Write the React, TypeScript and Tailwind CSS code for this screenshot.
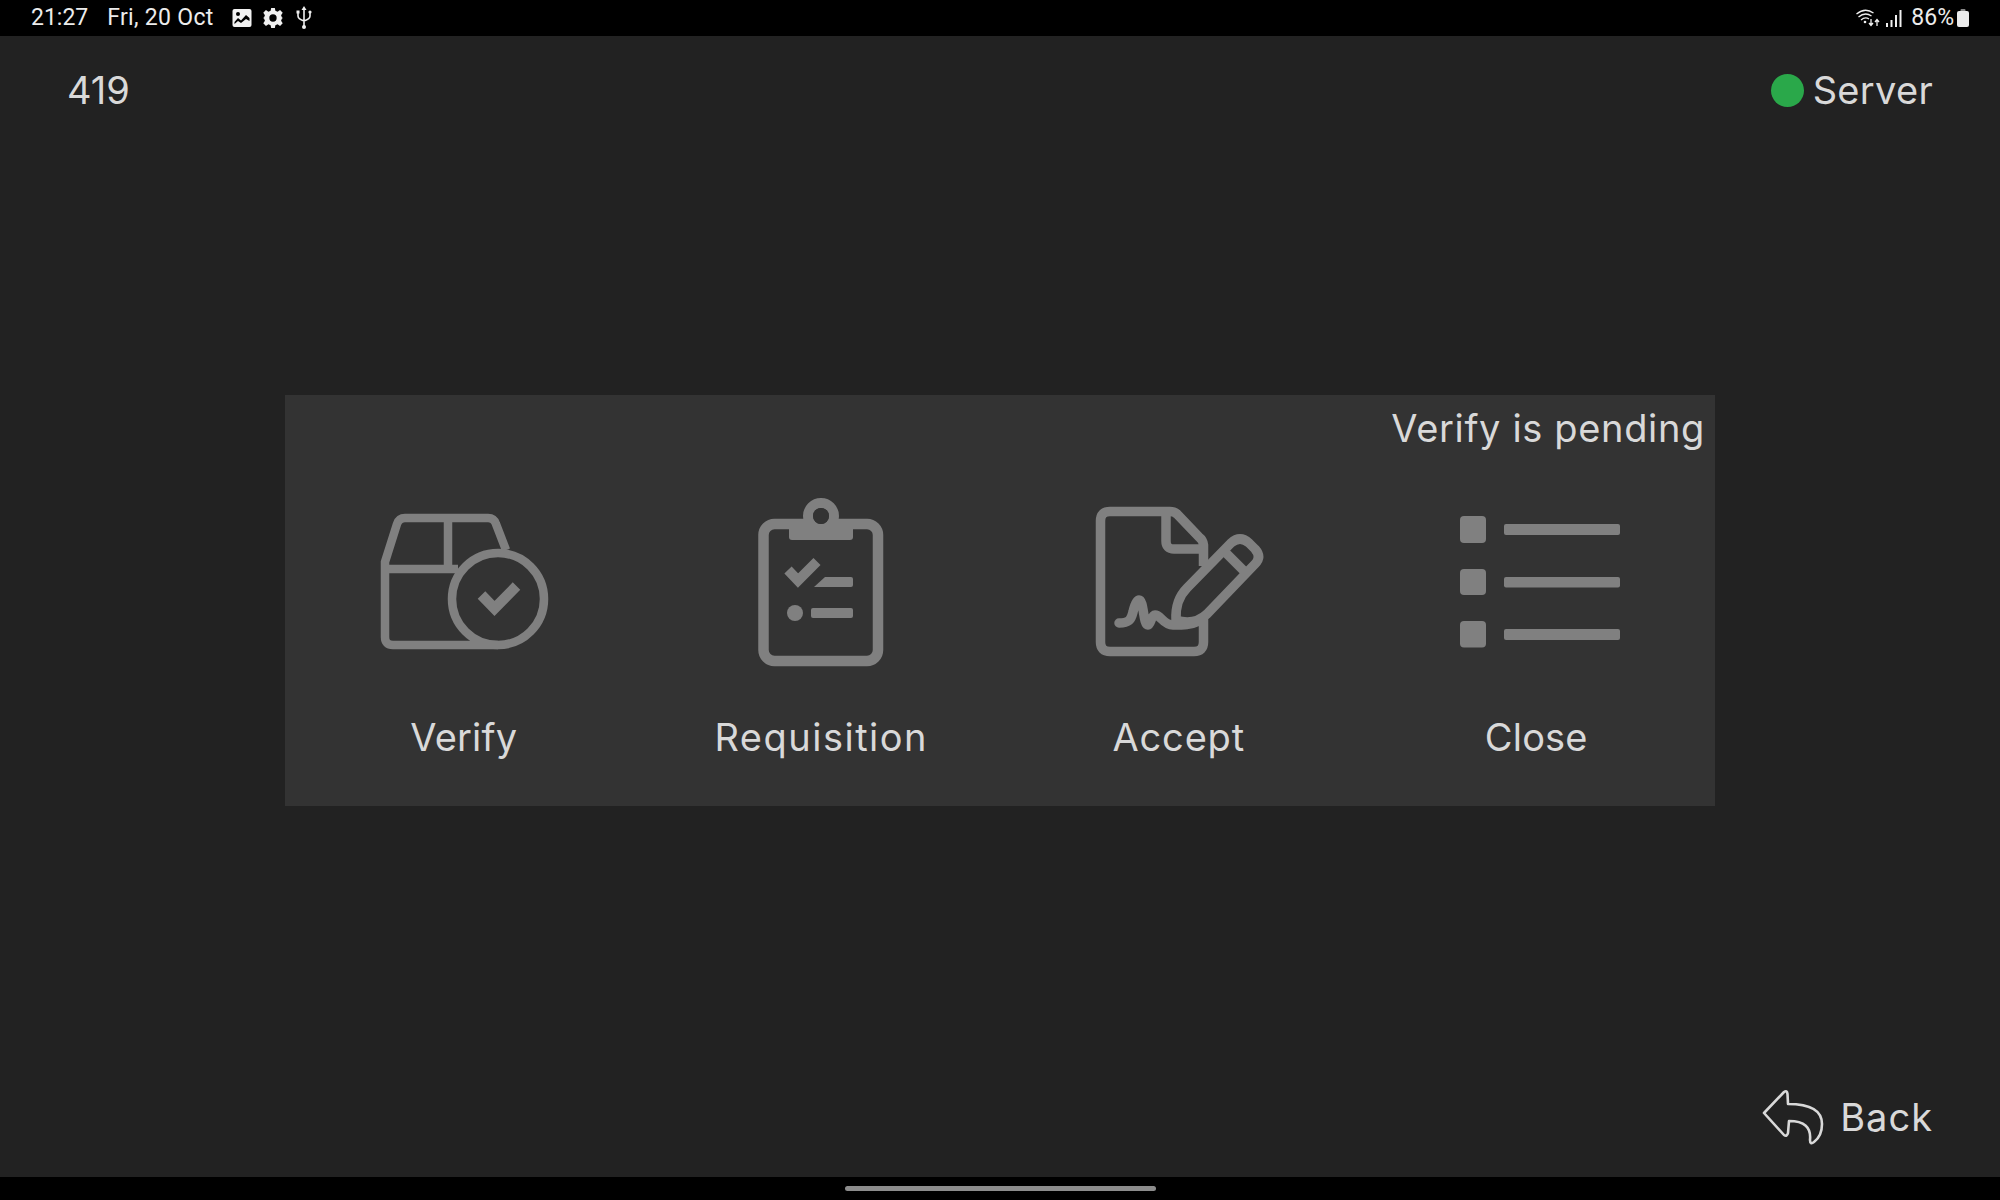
const labelFont = "font-['Inter','Open_Sans',sans-serif]";

function VerifyIcon() {
  return (
    <svg width="170" height="180" viewBox="378 490 170 180" fill="none" stroke="#808080" className="overflow-visible">
      <path strokeWidth="8.5" d="M505 550 L495 524 Q493 518 487 518 L404 518 Q398 518 396 524 L384 562 L384 637 Q384 645 392 645 L497 645" />
      <path strokeWidth="8.5" d="M384 569 H457 M447 518 V569" />
      <circle cx="497" cy="599" r="46" strokeWidth="8.5" />
      <path strokeWidth="10.5" d="M480.5 595 L493.5 608.5 L515.5 586" />
    </svg>
  );
}

function RequisitionIcon() {
  return (
    <svg width="170" height="180" viewBox="736 490 170 180" fill="none" stroke="#808080" className="overflow-visible">
      <rect x="763.5" y="524" width="114.5" height="137" rx="11" strokeWidth="10.5" />
      <circle cx="821" cy="516" r="13" strokeWidth="10" fill="#333333" />
      <path fill="#808080" stroke="none" d="M789 525 H853 V537 Q853 540 850 540 H792 Q789 540 789 537 Z" />
      <circle cx="821" cy="516" r="8" fill="#333333" stroke="none" />
      <path strokeWidth="10" d="M788 570 L798 580.5 L817 561.5" />
      <path fill="#808080" stroke="none" d="M814 587 L825 577 H851 Q853 577 853 579 V585 Q853 587 851 587 Z" />
      <circle cx="795" cy="613" r="8" fill="#808080" stroke="none" />
      <rect x="811" y="608" width="42" height="10" rx="2" fill="#808080" stroke="none" />
    </svg>
  );
}

function AcceptIcon() {
  return (
    <svg width="170" height="180" viewBox="1093 490 170 180" fill="none" stroke="#808080" strokeWidth="9.5" strokeLinecap="round" className="overflow-visible">
      <path strokeLinecap="butt" d="M1202.5 566 L1202.5 545 Q1202 540 1198 537 L1176 514 Q1173 511.5 1169 511.5 L1109 511.5 Q1099.5 511.5 1099.5 521 L1099.5 642 Q1099.5 651.5 1109 651.5 L1193 651.5 Q1202.5 651.5 1202.5 642 L1202.5 618" />
      <path d="M1165 513 V541 Q1165 549 1173 549 H1202" strokeLinecap="butt" />
      <path d="M1175 620 Q1174 600 1186 588 L1230 543 Q1239 535 1248 543 L1254 549 Q1261 557 1254 564 L1206 614 Q1193 626 1175 620" strokeLinejoin="round" />
      <path strokeLinecap="butt" d="M1225 553 L1245 573" />
      <path d="M1118 623 C1128 623 1130 620 1132 612 C1134 603 1136 600 1138 600 C1143 600 1142 625 1147 625 C1150 625 1150 615 1154 615 C1160 615 1162 625 1172 625 C1182 625 1190 625 1198 621" />
    </svg>
  );
}

function CloseIcon() {
  return (
    <svg width="170" height="180" viewBox="1451 490 170 180" fill="#808080" className="overflow-visible">
      <rect x="1460" y="516" width="26" height="27" rx="4" />
      <rect x="1460" y="569" width="26" height="26" rx="4" />
      <rect x="1460" y="621" width="26" height="26.5" rx="4" />
      <rect x="1504" y="524" width="116" height="11" rx="2" />
      <rect x="1504" y="577" width="116" height="10.5" rx="2" />
      <rect x="1504" y="629" width="116" height="11" rx="2" />
    </svg>
  );
}

function MenuTile({ icon, label, tracking }: { icon: React.ReactNode; label: string; tracking: string }) {
  return (
    <div className="flex flex-col items-center">
      {icon}
      <span className={`mt-[45px] text-[38px] leading-[44px] text-[#d9d9d9] ${tracking}`}>{label}</span>
    </div>
  );
}

function StatusBar() {
  return (
    <div className="flex h-9 items-center justify-between bg-black pl-[31px] pr-[31px] font-['Roboto',sans-serif] text-[23px] text-[#ececec]">
      <div className="flex items-center">
        <span>21:27</span>
        <span className="ml-[19px] tracking-[0.3px]">Fri, 20 Oct</span>
        <svg width="20" height="20" viewBox="0 0 20 20" className="ml-[18px]">
          <rect x="0.5" y="1" width="19" height="18" rx="2" fill="#f2f2f2" />
          <circle cx="6" cy="6" r="2" fill="#000" />
          <path d="M2.5 14 L6 10 L9 12.5 L14 7 L17.5 10 V13 L14 11 L9 15 L6 13 L2.5 16 Z" fill="#000" />
        </svg>
        <svg width="22" height="22" viewBox="0 0 24 24" fill="#f0f0f0" className="ml-[10px]">
          <path fillRule="evenodd" d="M10 1 H14 L14.6 4.2 L17 5.2 L19.7 3.4 L22.6 6.3 L20.8 9 L21.8 11.4 L23 12 L21.8 12.6 L20.8 15 L22.6 17.7 L19.7 20.6 L17 18.8 L14.6 19.8 L14 23 H10 L9.4 19.8 L7 18.8 L4.3 20.6 L1.4 17.7 L3.2 15 L2.2 12.6 L1 12 L2.2 11.4 L3.2 9 L1.4 6.3 L4.3 3.4 L7 5.2 L9.4 4.2 Z M12 8 A4 4 0 1 0 12 16 A4 4 0 1 0 12 8 Z" />
        </svg>
        <svg width="16" height="24" viewBox="0 0 16 24" fill="none" stroke="#f0f0f0" strokeWidth="1.6" className="ml-[12px]">
          <path d="M8 3 V20 M2 7 V10 Q2 13 8 15 Q14 13 14 10 V7" />
          <path d="M8 0 L10.5 4 H5.5 Z" fill="#f0f0f0" stroke="none" />
          <circle cx="8" cy="21" r="2" fill="#f0f0f0" stroke="none" />
          <rect x="0.5" y="4.5" width="3" height="3" fill="#f0f0f0" stroke="none" />
          <circle cx="14" cy="6" r="1.6" fill="#f0f0f0" stroke="none" />
        </svg>
      </div>
      <div className="flex items-center">
        <svg width="24" height="18" viewBox="0 0 24 18" fill="none" stroke="#f0f0f0" strokeWidth="1.3">
          <path d="M0.5 5 Q9 -2 17.5 4 M2.5 8 Q9 2.5 15.5 7 M5 11 Q9 7.5 13 10" />
          <circle cx="9" cy="13" r="1.3" fill="#f0f0f0" stroke="none" />
          <path d="M15 10 V16 M13 14 L15 16.5 L17 14 M21 17 V11 M19 13 L21 10.5 L23 13" />
        </svg>
        <svg width="16" height="17" viewBox="0 0 16 17" fill="#f0f0f0" className="ml-[6px]">
          <rect x="0" y="13" width="2" height="4" />
          <rect x="4.5" y="10" width="2" height="7" />
          <rect x="9" y="5" width="2" height="12" />
          <rect x="13.5" y="0" width="2" height="17" />
        </svg>
        <span className="ml-[9px]">86%</span>
        <svg width="12" height="18" viewBox="0 0 12 18" className="ml-[3px]">
          <rect x="3.5" y="0" width="5" height="3" rx="1" fill="#8a8a8a" />
          <rect x="0" y="2" width="12" height="16" rx="2" fill="#ececec" />
        </svg>
      </div>
    </div>
  );
}

export default function App() {
  return (
    <div className={`flex h-screen w-full flex-col bg-black ${labelFont}`}>
      <StatusBar />
      <div className="flex flex-1 flex-col bg-[#222222] text-[#d9d9d9]">
        <div className="flex items-center justify-between pl-[67px] pr-[67px] pt-[32px] text-[38px] leading-[44px]">
          <span>419</span>
          <div className="flex items-center gap-[9px]">
            <span className="h-[33px] w-[33px] rounded-full bg-[#2aa84a]" />
            <span className="tracking-[0.3px]">Server</span>
          </div>
        </div>
        <div className="mx-auto mt-[283px] h-[411px] w-[1430px] bg-[#333333]">
          <div className="flex h-[95px] justify-end pr-[10px] pt-[11px]">
            <span className="text-[38px] leading-[44px] tracking-[0.65px]">Verify is pending</span>
          </div>
          <div className="grid grid-cols-4">
            <MenuTile icon={<VerifyIcon />} label="Verify" tracking="tracking-[0.2px]" />
            <MenuTile icon={<RequisitionIcon />} label="Requisition" tracking="tracking-[1.5px]" />
            <MenuTile icon={<AcceptIcon />} label="Accept" tracking="tracking-[0.8px]" />
            <MenuTile icon={<CloseIcon />} label="Close" tracking="tracking-[0.2px]" />
          </div>
        </div>
        <div className="mt-auto flex items-center justify-end gap-[16px] pb-[32px] pr-[67px]">
          <svg width="62" height="56" viewBox="1763 1089 62 56" fill="none" stroke="#d9d9d9" strokeWidth="2.6" strokeLinejoin="round">
            <path d="M1765 1113 L1785 1092 Q1788 1090 1788.5 1094 L1789 1104 Q1823 1104 1823 1124 Q1823 1136 1815 1142 Q1811 1145 1811 1140 Q1813 1121 1790 1121 L1789 1133 Q1788 1137 1785 1135 Z" />
          </svg>
          <span className="text-[38px] leading-[44px] tracking-[1px]">Back</span>
        </div>
      </div>
      <div className="flex h-[23px] items-center justify-center bg-black">
        <div className="h-[5px] w-[311px] rounded-full bg-[#8c8c8c]" />
      </div>
    </div>
  );
}
